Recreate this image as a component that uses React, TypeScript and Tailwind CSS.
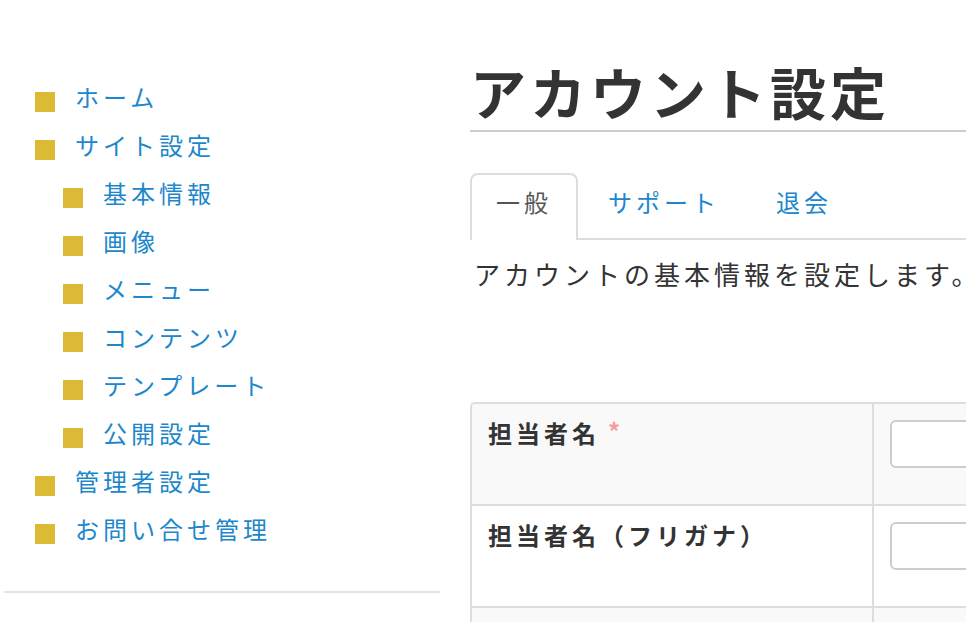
const font = { fontFamily: '"Noto Sans CJK JP", "Noto Sans", sans-serif' };

type NavItem = { label: string; sub?: boolean };

const navItems: NavItem[] = [
  { label: 'ホーム' },
  { label: 'サイト設定' },
  { label: '基本情報', sub: true },
  { label: '画像', sub: true },
  { label: 'メニュー', sub: true },
  { label: 'コンテンツ', sub: true },
  { label: 'テンプレート', sub: true },
  { label: '公開設定', sub: true },
  { label: '管理者設定' },
  { label: 'お問い合せ管理' },
];

const tabs = ['一般', 'サポート', '退会'];

const rows = [
  { label: '担当者名', required: true },
  { label: '担当者名（フリガナ）', required: false },
  { label: '', required: false },
];

function Sidebar() {
  return (
    <aside className="ml-[4px] w-[436px] shrink-0 pt-[73px]">
      <ul>
        {navItems.map((item) => (
          <li
            className={`flex h-[48px] items-center ${item.sub ? 'pl-[59px]' : 'pl-[31px]'}`}
            key={item.label}
          >
            <span className="mt-[9px] h-[20px] w-[20px] shrink-0 bg-[#dbbb36]" />
            <a className="ml-[20px] text-[24px] tracking-[4px] text-[#1d87cc]" href="#">
              {item.label}
            </a>
          </li>
        ))}
      </ul>
      <div className="mt-[38px] h-[2px] bg-[#e3e3e3]" />
    </aside>
  );
}

function Main() {
  return (
    <main className="ml-[30px] w-[620px] shrink-0 pt-[58px]">
      <h1 className="border-b-2 border-[#cccccc] pb-[6px] text-[56px] leading-[66px] font-bold tracking-[4px] text-[#333333]">
        アカウント設定
      </h1>

      <div className="mt-[41px] flex gap-[4px] border-b-2 border-[#dddddd]">
        {tabs.map((tab, index) => (
          <div
            className={
              index === 0
                ? '-mb-[2px] h-[67px] rounded-t-[8px] border-2 border-b-0 border-[#dddddd] bg-white px-[24px] pt-[9px] text-[24px] leading-[36px] tracking-[4px] text-[#555555]'
                : 'h-[65px] px-[26px] pt-[11px] text-[24px] leading-[36px] tracking-[4px] text-[#1d87cc]'
            }
            key={tab}
          >
            {tab}
          </div>
        ))}
      </div>

      <p className="mt-[14px] pl-[4px] text-[26px] leading-[40px] tracking-[4px] whitespace-nowrap text-[#333333]">
        アカウントの基本情報を設定します。
      </p>

      <div className="mt-[108px] overflow-hidden rounded-tl-[5px] border-t-2 border-l-2 border-[#dddddd]">
        {rows.map((row, index) => (
          <div
            className={`grid h-[102px] grid-cols-[402px_1fr] border-b-2 border-[#dddddd] ${
              index % 2 === 0 ? 'bg-[#f9f9f9]' : 'bg-white'
            }`}
            key={index}
          >
            <div className="border-r-2 border-[#dddddd] px-[16px] pt-[12px] text-[24px] leading-[34px] font-bold tracking-[4px] text-[#333333]">
              {row.label}
              {row.required ? (
                <span className="ml-[8px] align-top text-[24px] leading-[30px] font-bold text-[#f59d9d]">*</span>
              ) : null}
            </div>
            <div className="px-[16px] pt-[16px]">
              {index < 2 ? (
                <input
                  className="h-[48px] w-[300px] rounded-[6px] border-2 border-[#cccccc] bg-white"
                  type="text"
                />
              ) : null}
            </div>
          </div>
        ))}
      </div>
    </main>
  );
}

export default function App() {
  return (
    <div className="flex h-[622px] w-[966px] overflow-hidden bg-white" style={font}>
      <Sidebar />
      <Main />
    </div>
  );
}
